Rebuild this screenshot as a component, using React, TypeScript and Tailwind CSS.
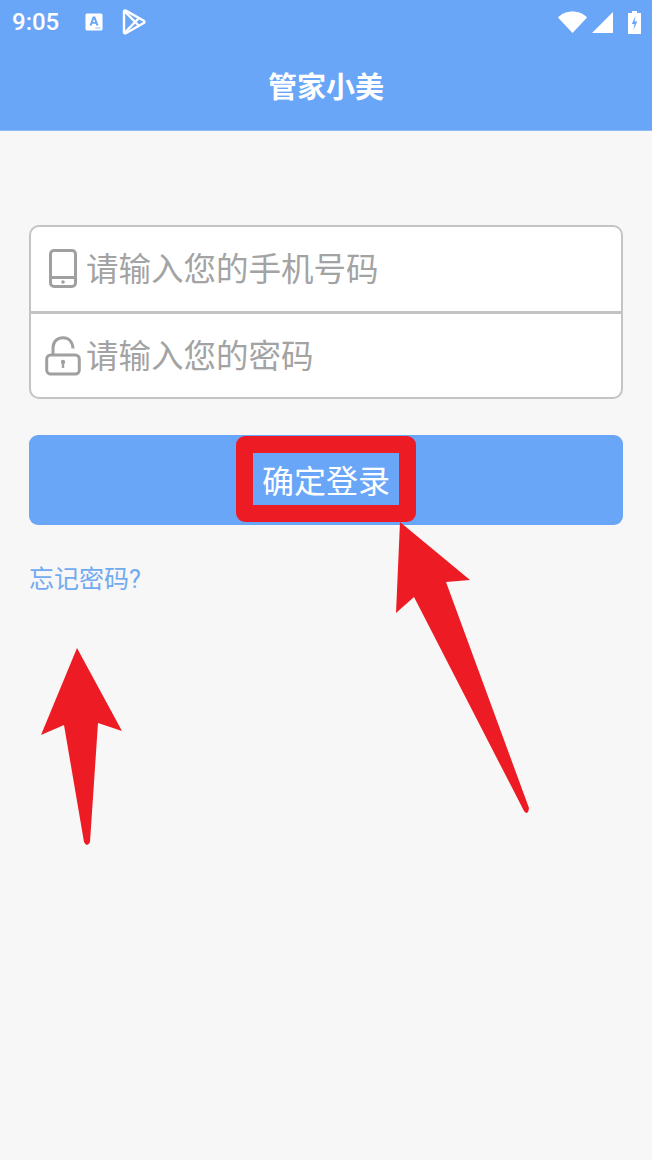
const cjk = "font-['Roboto','Noto_Sans_CJK_SC',sans-serif]";

function StatusBar() {
  return (
    <div className="flex h-[44px] items-center justify-between pr-[11px] pl-[12px]">
      <div className="flex items-center">
        <span className="w-[48px] font-['Roboto',sans-serif] text-[24px] leading-none font-medium text-white">9:05</span>
        <svg width="18" height="18" viewBox="0 0 18 18" className="ml-[25px]">
          <rect x="0.5" y="0.5" width="17" height="17" rx="1.5" fill="#fff" />
          <path d="M4.500 12.500 7.800 3.500h2.400l3.300 9h-2.200l-.6-1.800H7.300l-.6 1.800Zm3.400-3.400h2.200L9 5.900Z" fill="#6aa6f8" />
          <path d="M10.500 15h5.500" stroke="#6aa6f8" strokeWidth="1.200" strokeDasharray="1.200 .6" />
        </svg>
        <svg width="24" height="26" viewBox="0 0 24 26" className="ml-[19px]" fill="none" stroke="#fff" strokeWidth="2.400" strokeLinejoin="round">
          <path d="M2 2.600c0-1 .9-1.500 1.800-1l18 10.200c.9.500.9 1.700 0 2.200l-18 10.200c-.9.500-1.800 0-1.800-1Z" />
          <path d="M2.400 2 17.500 17.500M2.400 24 17.500 8.500" />
        </svg>
      </div>
      <div className="flex items-center">
        <svg width="29" height="22" viewBox="0 0 29 22">
          <path d="M0 6.500C3.500 2.500 9 .5 14.500.5S25.500 2.500 29 6.500L14.500 22Z" fill="#fff" />
        </svg>
        <svg width="21" height="21" viewBox="0 0 21 21" className="ml-[5px]">
          <path d="M21 0v21H0Z" fill="#fff" />
        </svg>
        <svg width="13" height="23" viewBox="0 0 13 23" className="ml-[15px]">
          <path d="M4 0h5v2h4v21H0V2h4Z" fill="#fff" />
          <path d="M7.500 5 3.800 13h2.600l-1 6 3.900-8.500H6.700Z" fill="#6aa6f8" />
        </svg>
      </div>
    </div>
  );
}

function PhoneIcon() {
  return (
    <svg width="28" height="40" viewBox="0 0 28 40" fill="none" stroke="#a0a0a0" strokeWidth="3">
      <rect x="1.500" y="1.500" width="25" height="36" rx="3.500" />
      <path d="M1.500 28.500h25" />
      <circle cx="14" cy="33" r="1.800" fill="#a0a0a0" stroke="none" />
    </svg>
  );
}

function LockIcon() {
  return (
    <svg width="36" height="40" viewBox="0 0 36 40" fill="none" stroke="#a0a0a0" strokeWidth="3">
      <path d="M8 19v-7C8 5.500 12.500 1.700 18 1.700S27.500 5.500 28 12.500" />
      <rect x="1.700" y="19" width="32.600" height="19" rx="4" />
      <path d="M18 26v6" strokeWidth="2.400" />
      <circle cx="18" cy="26" r="2.200" fill="#a0a0a0" stroke="none" />
    </svg>
  );
}

function Field({ icon, placeholder, last }: { icon: React.ReactNode; placeholder: string; last?: boolean }) {
  return (
    <div className={`flex items-center ${last ? "h-[83px]" : "h-[87px] border-b-[3px] border-[#c4c4c4]"}`}>
      <div className="flex w-[54px] shrink-0 justify-center pl-[9px]">{icon}</div>
      <span className={`ml-px text-[32.500px] leading-none text-[#a3a3a3] ${last ? "pt-[4px]" : "pt-[2px]"}`}>{placeholder}</span>
    </div>
  );
}

export default function App() {
  return (
    <div className={`relative h-[1160px] w-[652px] overflow-hidden bg-[#f7f7f7] ${cjk}`}>
      <header className="h-[131px] border-b border-[#8fbcf5] bg-[#6aa6f8]">
        <StatusBar />
        <h1 className="mt-[24px] text-center text-[29px] leading-[40px] font-bold text-white">管家小美</h1>
      </header>

      <main className="px-[29px] pt-[94px]">
        <div className="overflow-hidden rounded-[10px] border-2 border-[#c4c4c4] bg-white">
          <Field icon={<PhoneIcon />} placeholder="请输入您的手机号码" />
          <Field icon={<LockIcon />} placeholder="请输入您的密码" last />
        </div>
        <button type="button" className="mt-[36px] h-[90px] w-full rounded-[9px] bg-[#6aa6f8] pt-[3px] text-[32px] text-white">
          确定登录
        </button>
        <p className="mt-[40px] text-[25px] leading-[30px] text-[#72aaf0]">忘记密码?</p>
      </main>

      {/* red annotations drawn over the page */}
      <div className="absolute top-[436px] left-[236px] h-[86px] w-[180px] rounded-[9px] border-[17px] border-[#ed1c24]" />
      <svg width="652" height="1160" viewBox="0 0 652 1160" className="pointer-events-none absolute top-0 left-0" fill="#ed1c24">
        <path d="M77 648 122 731 98 723 90 842Q87 848 84 842L64 725 41 735Z" />
        <path d="M400 522 470 580 446 582 529 808Q528 816 524 811L414 597 396 613Z" />
      </svg>
    </div>
  );
}
